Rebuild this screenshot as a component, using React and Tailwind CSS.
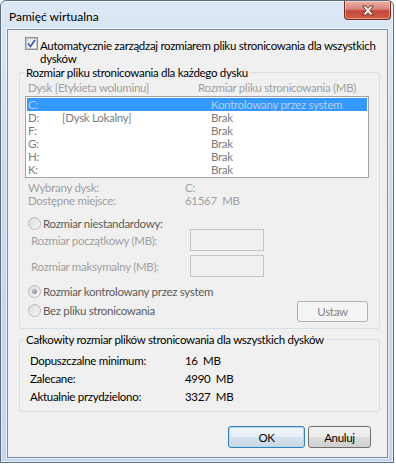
import React from "react";

const drives = [
  { d: "C:", l: "", s: "Kontrolowany przez system", sel: true },
  { d: "D:", l: "[Dysk Lokalny]", s: "Brak" },
  { d: "F:", l: "", s: "Brak" },
  { d: "G:", l: "", s: "Brak" },
  { d: "H:", l: "", s: "Brak" },
  { d: "K:", l: "", s: "Brak" },
];

const totals = [
  { label: "Dopuszczalne minimum:", value: "16  MB" },
  { label: "Zalecane:", value: "4990  MB" },
  { label: "Aktualnie przydzielono:", value: "3327  MB" },
];

function Radio({ checked }) {
  return (
    <span className="flex h-[13px] w-[13px] shrink-0 items-center justify-center rounded-full border border-[#b9b9b9] bg-[linear-gradient(135deg,#d9d9d9,#f9f9f9)]">
      {checked && <span className="h-[5px] w-[5px] rounded-full bg-[radial-gradient(circle_at_35%_35%,#c4c4c4,#7e7e7e)]" />}
    </span>
  );
}

function Checkbox() {
  return (
    <span className="flex h-[13px] w-[13px] shrink-0 items-center justify-center border border-[#8e8f8f] bg-white">
      <span className="flex h-[11px] w-[11px] items-center justify-center border border-[#c6c9cc] bg-[linear-gradient(135deg,#dcdfe2,#ffffff)]">
        <svg width="9" height="9" viewBox="0 0 9 9">
          <path d="M1 4.5 L3.5 7.5 L8 1" fill="none" stroke="#3b57a3" strokeWidth="1.6" />
        </svg>
      </span>
    </span>
  );
}

function Button({ children, primary, disabled, className }) {
  let look = "border-[#707070] bg-[linear-gradient(to_bottom,#f2f2f2_0%,#ebebeb_50%,#dddddd_50%,#cfcfcf_100%)] text-black";
  if (primary) look = "border-[#3c7fb1] bg-[linear-gradient(to_bottom,#f0f5fa_0%,#e6eef6_50%,#d6e2ee_50%,#c9d8e7_100%)] text-black shadow-[inset_0_0_0_1px_#a8dbf7]";
  if (disabled) look = "border-[#adb2b5] bg-[#f4f4f4] text-[#838383]";
  return (
    <div className={`flex items-center justify-center rounded-[3px] border ${look} ${className}`}>
      {children}
    </div>
  );
}

export default function App() {
  return (
    <div className="h-[467px] w-[396px] bg-white font-['Lato','Noto_Sans',sans-serif] text-[11.5px] leading-[13px] tracking-[-0.3px]">
      <div className="flex h-[463px] w-[394px] flex-col rounded-t-[6px] border border-[#5d6e83] bg-[linear-gradient(to_bottom,#dce8f5,#c8dbef_40%,#c2d7ed)] pl-[6px] pr-[5px] pb-[4px] shadow-[inset_0_0_0_1px_rgba(255,255,255,0.55)]">
        {/* title bar */}
        <div className="-ml-[6px] -mr-[5px] flex h-[28px] items-start justify-between">
          <span className="ml-[8px] mt-[9px] text-[12px] tracking-normal text-black">Pamięć wirtualna</span>
          <div className="mr-[2px] flex h-[19px] w-[47px] items-center justify-center rounded-b-[4px] border border-t-0 border-[#7c2a22] bg-[linear-gradient(to_bottom,#eab3a6_0%,#d9837a_45%,#c2493a_55%,#cf5f45_100%)] shadow-[inset_0_0_0_1px_rgba(255,255,255,0.35)]">
            <svg width="14" height="11" viewBox="0 0 14 11">
              <path
                d="M1.5 1 H5 L7 3.4 L9 1 H12.5 L8.8 5.5 L12.5 10 H9 L7 7.6 L5 10 H1.5 L5.2 5.5 Z"
                fill="#ffffff"
                stroke="#6b2a22"
                strokeWidth="0.9"
                strokeLinejoin="round"
              />
            </svg>
          </div>
        </div>

        {/* client area */}
        <div className="flex h-[429px] flex-col border border-[#7b8ea5] bg-[#f0f0f0] pt-[7px] shadow-[0_0_0_1px_rgba(255,255,255,0.6)]">
          <div className="ml-[17px] flex items-start gap-[2px]">
            <Checkbox />
            <div className="mt-[2px] whitespace-nowrap text-black">
              Automatycznie zarządzaj rozmiarem pliku stronicowania dla wszystkich
              <br />
              dysków
            </div>
          </div>

          <fieldset className="ml-[11px] mt-[1px] w-[361px] rounded-[3px] border border-[#d5dfe5] pb-[6px]">
            <legend className="ml-[4px] px-[2px] text-black">Rozmiar pliku stronicowania dla każdego dysku</legend>

            <div className="mt-[2px] flex pl-[8px] text-[#a0a0a0]">
              <span className="w-[170px]">Dysk [Etykieta woluminu]</span>
              <span>Rozmiar pliku stronicowania (MB)</span>
            </div>

            <div className="ml-[5px] mt-[2px] w-[344px] border border-[#a3a3a3] bg-white p-[1px]">
              {drives.map((r) => (
                <div
                  key={r.d}
                  className={`flex h-[13px] items-center pl-[1px] ${r.sel ? "bg-[#3399ff] text-[#b3cff0]" : "text-[#7d7d7d]"}`}
                >
                  <span className="w-[34px]">{r.d}</span>
                  <span className="w-[149px]">{r.l}</span>
                  <span>{r.s}</span>
                </div>
              ))}
            </div>

            <div className="mt-[3px] flex pl-[8px] text-[#a0a0a0]">
              <span className="w-[157px]">Wybrany dysk:</span>
              <span>C:</span>
            </div>
            <div className="flex pl-[8px] text-[#a0a0a0]">
              <span className="w-[157px]">Dostępne miejsce:</span>
              <span>61567&nbsp;&nbsp;MB</span>
            </div>

            <div className="mt-[11px] flex h-[11px] items-center gap-[2px] pl-[8px] text-[#5c5c5c]">
              <Radio />
              <span>Rozmiar niestandardowy:</span>
            </div>

            <div className="flex h-[22px] items-center pl-[11px] text-[#a0a0a0]">
              <span className="w-[159px]">Rozmiar początkowy (MB):</span>
              <div className="h-[22px] w-[74px] border border-[#c4c4c4] bg-[#f0f0f0]" />
            </div>
            <div className="mt-[4px] flex h-[22px] items-center pl-[11px] text-[#a0a0a0]">
              <span className="w-[159px]">Rozmiar maksymalny (MB):</span>
              <div className="h-[22px] w-[74px] border border-[#c4c4c4] bg-[#f0f0f0]" />
            </div>

            <div className="mt-[8px] flex h-[13px] items-center gap-[2px] pl-[8px] text-[#5c5c5c]">
              <Radio checked />
              <span>Rozmiar kontrolowany przez system</span>
            </div>

            <div className="mt-[3px] flex items-start justify-between pl-[8px] pr-[11px]">
              <div className="mt-[3px] flex h-[13px] items-center gap-[2px] text-[#5c5c5c]">
                <Radio />
                <span>Bez pliku stronicowania</span>
              </div>
              <Button disabled className="h-[21px] w-[71px]">Ustaw</Button>
            </div>
          </fieldset>

          <fieldset className="ml-[11px] mt-[4px] w-[361px] rounded-[3px] border border-[#d5dfe5] pb-[6px]">
            <legend className="ml-[4px] px-[2px] text-black">Całkowity rozmiar plików stronicowania dla wszystkich dysków</legend>
            <div className="mt-[5px]">
              {totals.map((t) => (
                <div key={t.label} className="flex h-[18px] items-center pl-[10px] text-black">
                  <span className="w-[155px]">{t.label}</span>
                  <span className="whitespace-pre">{t.value}</span>
                </div>
              ))}
            </div>
          </fieldset>

          <div className="mr-[16px] mt-[14px] flex justify-end gap-[3px]">
            <Button primary className="h-[22px] w-[77px]">OK</Button>
            <Button className="h-[22px] w-[63px]">Anuluj</Button>
          </div>
        </div>
      </div>
    </div>
  );
}
